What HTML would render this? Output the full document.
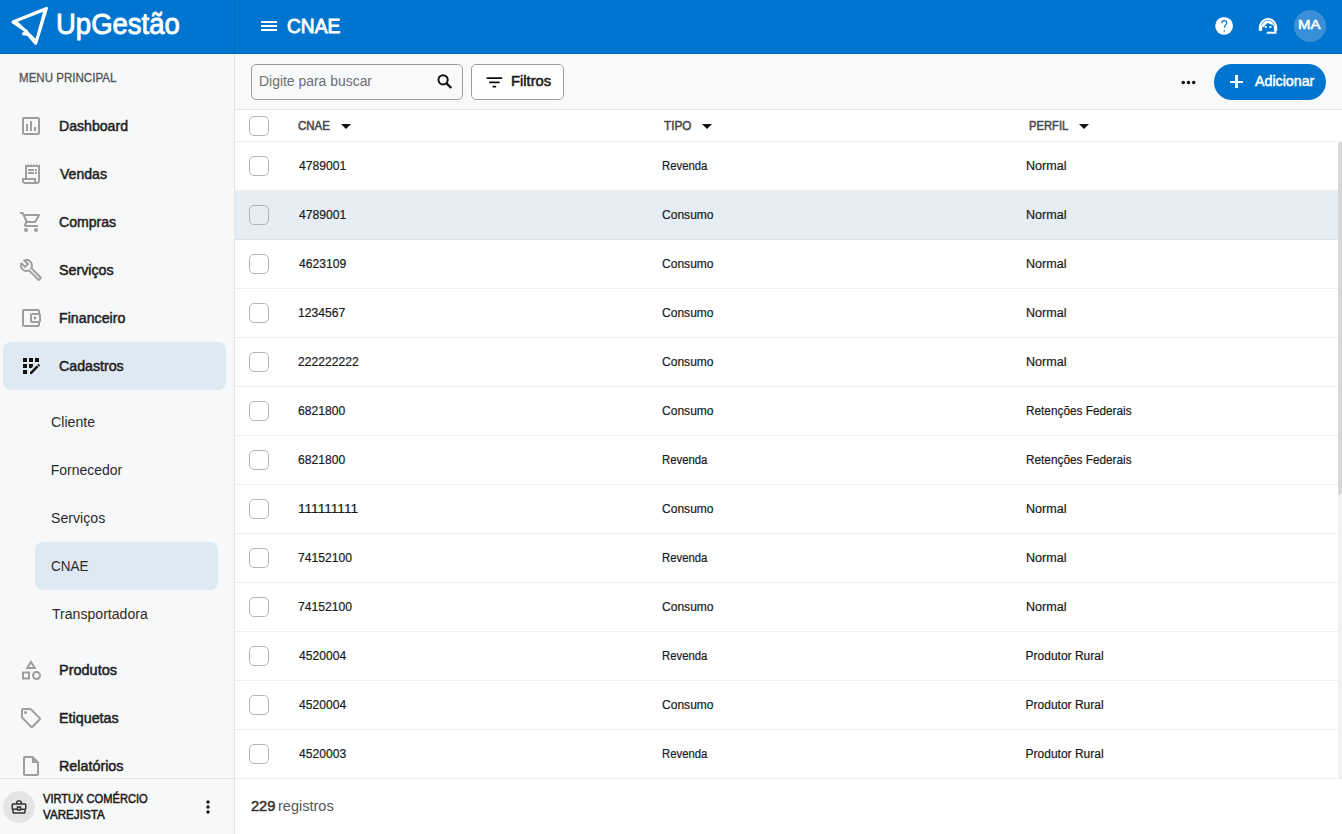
<!DOCTYPE html>
<html><head><meta charset="utf-8">
<style>
*{box-sizing:border-box;margin:0;padding:0}
html,body{width:1342px;height:834px;overflow:hidden;background:#fff;font-family:"Liberation Sans",sans-serif;position:relative}
.a{position:absolute;white-space:nowrap;line-height:1;transform-origin:0 0}
svg{display:block}
.ic{position:absolute}
</style></head><body>
<!-- top bar -->
<div style="position:absolute;left:0;top:0;width:1342px;height:54px;background:#0075cf"></div>
<div style="position:absolute;left:234px;top:0;width:1px;height:54px;background:#006dc0"></div>
<div style="position:absolute;left:0;top:53px;width:1342px;height:1px;background:#0068b8"></div>
<!-- sidebar -->
<div style="position:absolute;left:0;top:54px;width:234px;height:780px;background:#f7f8fa"></div>
<div style="position:absolute;left:234px;top:54px;width:1px;height:780px;background:#e2e3e5"></div>
<div style="position:absolute;left:3px;top:342px;width:223px;height:48px;background:#dfe9f3;border-radius:8px"></div>
<div style="position:absolute;left:35px;top:542px;width:183px;height:48px;background:#dfe9f3;border-radius:8px"></div>
<div style="position:absolute;left:0;top:778px;width:234px;height:1px;background:#e2e3e5"></div>
<div style="position:absolute;left:3px;top:791px;width:32px;height:32px;background:#e3e4e6;border-radius:50%"></div>
<!-- toolbar -->
<div style="position:absolute;left:235px;top:54px;width:1107px;height:55px;background:#f8f9fb"></div>
<div style="position:absolute;left:235px;top:109px;width:1107px;height:1px;background:#e3e4e6"></div>
<div style="position:absolute;left:251px;top:64px;width:212px;height:36px;border:1px solid #9d9d9d;border-radius:5px"></div>
<div style="position:absolute;left:471px;top:64px;width:93px;height:36px;border:1px solid #9d9d9d;border-radius:5px;background:#fff"></div>
<div style="position:absolute;left:1214px;top:64px;width:112px;height:36px;border-radius:18px;background:#0075cf"></div>
<!-- avatar -->
<div style="position:absolute;left:1294px;top:10px;width:32px;height:32px;border-radius:50%;background:#3a8fd6"></div>
<!-- table header -->
<div style="position:absolute;left:235px;top:141px;width:1107px;height:1px;background:#efefef"></div>
<div style="position:absolute;left:235px;top:142px;width:1103px;height:48px;background:#fff"></div><div style="position:absolute;left:235px;top:190px;width:1103px;height:1px;background:#efefef"></div><div style="position:absolute;left:249px;top:156px;width:20px;height:20px;border:1px solid #b3b3b3;border-radius:5px"></div><div style="position:absolute;left:235px;top:191px;width:1103px;height:48px;background:#e6edf4"></div><div style="position:absolute;left:235px;top:239px;width:1103px;height:1px;background:#dce2e8"></div><div style="position:absolute;left:249px;top:205px;width:20px;height:20px;border:1px solid #b3b3b3;border-radius:5px"></div><div style="position:absolute;left:235px;top:240px;width:1103px;height:48px;background:#fff"></div><div style="position:absolute;left:235px;top:288px;width:1103px;height:1px;background:#efefef"></div><div style="position:absolute;left:249px;top:254px;width:20px;height:20px;border:1px solid #b3b3b3;border-radius:5px"></div><div style="position:absolute;left:235px;top:289px;width:1103px;height:48px;background:#fff"></div><div style="position:absolute;left:235px;top:337px;width:1103px;height:1px;background:#efefef"></div><div style="position:absolute;left:249px;top:303px;width:20px;height:20px;border:1px solid #b3b3b3;border-radius:5px"></div><div style="position:absolute;left:235px;top:338px;width:1103px;height:48px;background:#fff"></div><div style="position:absolute;left:235px;top:386px;width:1103px;height:1px;background:#efefef"></div><div style="position:absolute;left:249px;top:352px;width:20px;height:20px;border:1px solid #b3b3b3;border-radius:5px"></div><div style="position:absolute;left:235px;top:387px;width:1103px;height:48px;background:#fff"></div><div style="position:absolute;left:235px;top:435px;width:1103px;height:1px;background:#efefef"></div><div style="position:absolute;left:249px;top:401px;width:20px;height:20px;border:1px solid #b3b3b3;border-radius:5px"></div><div style="position:absolute;left:235px;top:436px;width:1103px;height:48px;background:#fff"></div><div style="position:absolute;left:235px;top:484px;width:1103px;height:1px;background:#efefef"></div><div style="position:absolute;left:249px;top:450px;width:20px;height:20px;border:1px solid #b3b3b3;border-radius:5px"></div><div style="position:absolute;left:235px;top:485px;width:1103px;height:48px;background:#fff"></div><div style="position:absolute;left:235px;top:533px;width:1103px;height:1px;background:#efefef"></div><div style="position:absolute;left:249px;top:499px;width:20px;height:20px;border:1px solid #b3b3b3;border-radius:5px"></div><div style="position:absolute;left:235px;top:534px;width:1103px;height:48px;background:#fff"></div><div style="position:absolute;left:235px;top:582px;width:1103px;height:1px;background:#efefef"></div><div style="position:absolute;left:249px;top:548px;width:20px;height:20px;border:1px solid #b3b3b3;border-radius:5px"></div><div style="position:absolute;left:235px;top:583px;width:1103px;height:48px;background:#fff"></div><div style="position:absolute;left:235px;top:631px;width:1103px;height:1px;background:#efefef"></div><div style="position:absolute;left:249px;top:597px;width:20px;height:20px;border:1px solid #b3b3b3;border-radius:5px"></div><div style="position:absolute;left:235px;top:632px;width:1103px;height:48px;background:#fff"></div><div style="position:absolute;left:235px;top:680px;width:1103px;height:1px;background:#efefef"></div><div style="position:absolute;left:249px;top:646px;width:20px;height:20px;border:1px solid #b3b3b3;border-radius:5px"></div><div style="position:absolute;left:235px;top:681px;width:1103px;height:48px;background:#fff"></div><div style="position:absolute;left:235px;top:729px;width:1103px;height:1px;background:#efefef"></div><div style="position:absolute;left:249px;top:695px;width:20px;height:20px;border:1px solid #b3b3b3;border-radius:5px"></div><div style="position:absolute;left:235px;top:730px;width:1103px;height:48px;background:#fff"></div><div style="position:absolute;left:235px;top:778px;width:1103px;height:1px;background:#efefef"></div><div style="position:absolute;left:249px;top:744px;width:20px;height:20px;border:1px solid #b3b3b3;border-radius:5px"></div><div style="position:absolute;left:249px;top:116px;width:20px;height:20px;border:1px solid #b3b3b3;border-radius:5px"></div>
<!-- scrollbar -->
<div style="position:absolute;left:1338px;top:142px;width:4px;height:636px;background:#f1f2f4"></div>
<div style="position:absolute;left:1338px;top:142px;width:4px;height:353px;background:#d6d7d9;border-radius:2px"></div>
<!-- footer -->
<div style="position:absolute;left:235px;top:778px;width:1107px;height:1px;background:#efefef"></div>
<!-- logo -->
<svg class="ic" style="left:0;top:0" width="54" height="54" viewBox="0 0 54 54">
<path fill-rule="evenodd" fill="#fff" stroke="#fff" stroke-width="3" stroke-linejoin="round" d="M12.9 22 L46.5 8.4 L35.8 43.4 L27.6 34 L23.4 33.9 L26.6 31.3 Z M15.1 21.2 L45.3 9.3 L36.4 41.5 Z"/>
</svg>
<svg class="ic" style="left:19px;top:114px" width="24" height="24" viewBox="0 0 24 24"><path fill="#9e9e9e" d="M9 17H7v-7h2v7zm4 0h-2V7h2v10zm4 0h-2v-4h2v4zm2 2H5V5h14v14zm0-16H5c-1.1 0-2 .9-2 2v14c0 1.1.9 2 2 2h14c1.1 0 2-.9 2-2V5c0-1.1-.9-2-2-2z"/></svg><svg class="ic" style="left:19px;top:162px" width="24" height="24" viewBox="0 0 24 24"><path fill="#9e9e9e" d="M19.5 3.5 18 2l-1.5 1.5L15 2l-1.5 1.5L12 2l-1.5 1.5L9 2 7.5 3.5 6 2v14H3v3c0 1.66 1.34 3 3 3h12c1.66 0 3-1.34 3-3V2l-1.5 1.5zM15 20H6c-.55 0-1-.45-1-1v-1h10v2zm4-1c0 .55-.45 1-1 1s-1-.45-1-1v-3H8V5h11v14zM9 7h6v2H9zm7 0h2v2h-2zm-7 3h6v2H9zm7 0h2v2h-2z"/></svg><svg class="ic" style="left:19px;top:210px" width="24" height="24" viewBox="0 0 24 24"><path fill="#9e9e9e" d="M15.55 13c.75 0 1.41-.41 1.75-1.03l3.58-6.49c.37-.66-.11-1.48-.87-1.48H5.21l-.94-2H1v2h2l3.6 7.59-1.35 2.44C4.52 15.37 5.48 17 7 17h12v-2H7l1.1-2h7.45zM6.16 6h12.15l-2.76 5H8.53L6.16 6zM7 18c-1.1 0-1.99.9-1.99 2S5.9 22 7 22s2-.9 2-2-.9-2-2-2zm10 0c-1.1 0-1.99.9-1.99 2s.89 2 1.99 2 2-.9 2-2-.9-2-2-2z"/></svg><svg class="ic" style="left:19px;top:258px" width="24" height="24" viewBox="0 0 24 24"><path fill="#9e9e9e" d="M22.61 18.99l-9.08-9.08c.93-2.34.45-5.1-1.44-7C9.79.61 6.21.4 3.66 2.26L7.5 6.11 6.08 7.52 2.25 3.69C.39 6.23.6 9.82 2.9 12.11c1.86 1.86 4.57 2.35 6.89 1.48l9.11 9.11c.39.39 1.02.39 1.41 0l2.3-2.3c.4-.38.4-1.01 0-1.41zm-3 1.6l-9.46-9.46c-.61.45-1.29.72-2 .82-1.36.2-2.79-.21-3.83-1.25C3.37 9.76 2.93 8.5 3 7.26l3.09 3.09 4.24-4.24-3.09-3.09c1.24-.07 2.49.37 3.44 1.31 1.08 1.08 1.49 2.57 1.24 3.96-.12.71-.42 1.37-.88 1.96l9.45 9.45-.88.89z"/></svg><svg class="ic" style="left:19px;top:306px" width="24" height="24" viewBox="0 0 24 24"><path fill="#9e9e9e" d="M21 7.28V5c0-1.1-.9-2-2-2H5c-1.11 0-2 .9-2 2v14c0 1.1.89 2 2 2h14c1.1 0 2-.9 2-2v-2.28c.59-.35 1-.98 1-1.72V9c0-.74-.41-1.37-1-1.72zM20 9v6h-7V9h7zM5 19V5h14v2h-6c-1.1 0-2 .9-2 2v6c0 1.1.9 2 2 2h6v2H5zM16 13.5c.83 0 1.5-.67 1.5-1.5s-.67-1.5-1.5-1.5-1.5.67-1.5 1.5.67 1.5 1.5 1.5z"/></svg><svg class="ic" style="left:19px;top:658px" width="24" height="24" viewBox="0 0 24 24"><path fill="#9e9e9e" d="M12 2l-5.5 9h11L12 2zm0 3.84L13.93 9h-3.87L12 5.84zM17.5 13c-2.49 0-4.5 2.01-4.5 4.5s2.01 4.5 4.5 4.5 4.5-2.01 4.5-4.5-2.01-4.5-4.5-4.5zm0 7c-1.38 0-2.5-1.12-2.5-2.5s1.12-2.5 2.5-2.5 2.5 1.12 2.5 2.5-1.12 2.5-2.5 2.5zM3 21.5h8v-8H3v8zm2-6h4v4H5v-4z"/></svg><svg class="ic" style="left:19px;top:706px" width="24" height="24" viewBox="0 0 24 24"><path fill="#9e9e9e" d="M21.41 11.41l-8.83-8.83c-.37-.37-.88-.58-1.41-.58H4c-1.1 0-2 .9-2 2v7.17c0 .53.21 1.04.59 1.41l8.83 8.83c.78.78 2.05.78 2.83 0l7.17-7.17c.78-.78.78-2.04-.01-2.83zM12.83 20L4 11.17V4h7.17L20 12.83 12.83 20zM6.5 5C5.67 5 5 5.67 5 6.5S5.67 8 6.5 8 8 7.33 8 6.5 7.33 5 6.5 5z"/></svg><svg class="ic" style="left:19px;top:754px" width="24" height="24" viewBox="0 0 24 24"><path fill="#9e9e9e" d="M14 2H6c-1.1 0-1.99.9-1.99 2L4 20c0 1.1.89 2 1.99 2H18c1.1 0 2-.9 2-2V8l-6-6zM6 20V4h7v5h5v11H6z"/></svg><svg class="ic" style="left:19px;top:354px" width="24" height="24" viewBox="0 0 24 24"><path fill="#111" d="M10 4h4v4h-4zM4 16h4v4H4zm0-6h4v4H4zm0-6h4v4H4zm10 8.42V10h-4v4h2.42zm6.88-1.13-1.17-1.17c-.16-.16-.42-.16-.58 0l-.88.88L20 12.75l.88-.88c.16-.16.16-.42 0-.58zM11 18.25V20h1.75l6.67-6.67-1.75-1.75zM16 4h4v4h-4z"/></svg><div style="position:absolute;left:261px;top:21px;width:16px;height:2px;background:#fff"></div><div style="position:absolute;left:261px;top:25px;width:16px;height:2px;background:#fff"></div><div style="position:absolute;left:261px;top:29px;width:16px;height:2px;background:#fff"></div><svg class="ic" style="left:1200px;top:0" width="50" height="54" viewBox="1200 0 50 54"><circle cx="1224.1" cy="25.9" r="8.9" fill="#fff"/><path d="M1221.7 23.3 C1221.7 21.7 1222.8 20.6 1224.2 20.6 C1225.7 20.6 1226.8 21.7 1226.8 23 C1226.8 24.7 1224.5 25.3 1224.3 27.6" fill="none" stroke="#0075cf" stroke-width="1.15"/><rect x="1223.6" y="30.2" width="1.3" height="1.3" fill="#0075cf"/></svg><svg class="ic" style="left:1250px;top:10px" width="34" height="30" viewBox="1250 10 34 30"><path d="M1260 28.5 V27 A8 8 0 0 1 1276 27 V28.5" fill="none" stroke="#fff" stroke-width="2"/><rect x="1258.8" y="25.6" width="3.4" height="5.4" rx="1.2" fill="#fff"/><rect x="1273.8" y="25.6" width="3.4" height="5.4" rx="1.2" fill="#fff"/><path d="M1261.6 27 A6.4 6.4 0 0 1 1274.4 27 Z" fill="#fff"/><path d="M1263.3 27.2 L1267.4 22.9 L1273.6 25.3 L1273.6 33 L1263.3 33 Z" fill="#0075cf"/><rect x="1264.7" y="26.1" width="2.1" height="1.7" fill="#fff"/><rect x="1269.2" y="26.1" width="2.4" height="1.7" fill="#fff"/><path d="M1275.5 30 V32.7 H1266.8" fill="none" stroke="#fff" stroke-width="2"/></svg><svg class="ic" style="left:430px;top:68px" width="30" height="28" viewBox="430 68 30 28"><circle cx="443.1" cy="79.8" r="4.6" fill="none" stroke="#111" stroke-width="1.95"/><path d="M446.3 83.1 L451.3 88" stroke="#111" stroke-width="2.3"/></svg><svg class="ic" style="left:484px;top:71.6px" width="20.8" height="20.8" viewBox="0 0 24 24"><path fill="#0a0a0a" d="M10 18h4v-2h-4v2zM3 6v2h18V6H3zm3 7h12v-2H6v2z"/></svg><svg class="ic" style="left:1177.5px;top:71.5px" width="21" height="21" viewBox="0 0 24 24"><path fill="#111" d="M6 10c-1.1 0-2 .9-2 2s.9 2 2 2 2-.9 2-2-.9-2-2-2zm12 0c-1.1 0-2 .9-2 2s.9 2 2 2 2-.9 2-2-.9-2-2-2zm-6 0c-1.1 0-2 .9-2 2s.9 2 2 2 2-.9 2-2-.9-2-2-2z"/></svg><div style="position:absolute;left:1230px;top:80.6px;width:13.1px;height:2.2px;background:#fff"></div><div style="position:absolute;left:1235.45px;top:75.3px;width:2.2px;height:12.8px;background:#fff"></div><svg class="ic" style="left:334px;top:114px" width="24" height="24" viewBox="0 0 24 24"><path fill="#111" d="M7 10l5 5 5-5z"/></svg><svg class="ic" style="left:694.7px;top:114px" width="24" height="24" viewBox="0 0 24 24"><path fill="#111" d="M7 10l5 5 5-5z"/></svg><svg class="ic" style="left:1072px;top:114px" width="24" height="24" viewBox="0 0 24 24"><path fill="#111" d="M7 10l5 5 5-5z"/></svg><svg class="ic" style="left:10px;top:798px" width="18" height="18" viewBox="0 0 24 24"><path fill="#333" d="M20 7h-4V5l-2-2h-4L8 5v2H4c-1.1 0-2 .9-2 2v5c0 .75.4 1.38 1 1.73V19c0 1.11.89 2 2 2h14c1.11 0 2-.89 2-2v-3.28c.59-.35 1-.99 1-1.72V9c0-1.1-.9-2-2-2zM10 5h4v2h-4V5zM4 9h16v5h-5v-3H9v3H4V9zm9 6h-2v-2h2v2zm6 4H5v-3h4v1h6v-1h4v3z"/></svg><svg class="ic" style="left:198px;top:797px" width="20" height="20" viewBox="0 0 24 24"><path fill="#1a1a1a" d="M12 8c1.1 0 2-.9 2-2s-.9-2-2-2-2 .9-2 2 .9 2 2 2zm0 2c-1.1 0-2 .9-2 2s.9 2 2 2 2-.9 2-2-.9-2-2-2zm0 6c-1.1 0-2 .9-2 2s.9 2 2 2 2-.9 2-2-.9-2-2-2z"/></svg>
<div class="a" style="left:286.64px;top:16.17px;font-size:20px;font-weight:normal;-webkit-text-stroke:0.5px #fff;color:#fff;transform:scaleX(0.9572);-webkit-text-stroke:0.9px #fff;">CNAE</div>
<div class="a" style="left:1298.28px;top:18.47px;font-size:13.5px;font-weight:normal;-webkit-text-stroke:0.5px #fff;color:#fff;transform:scaleX(1.1047);-webkit-text-stroke:0.6px #fff;">MA</div>
<div class="a" style="left:56.16px;top:8.92px;font-size:29.5px;font-weight:normal;color:#fff;transform:scaleX(0.9319);-webkit-text-stroke:0.9px #fff;">UpGestão</div>
<div class="a" style="left:18.94px;top:71.74px;font-size:12px;font-weight:normal;color:#555;transform:scaleX(0.9629);-webkit-text-stroke:0.3px #555;">MENU PRINCIPAL</div>
<div class="a" style="left:58.89px;top:118.95px;font-size:14px;font-weight:normal;-webkit-text-stroke:0.5px #1f1f1f;color:#1f1f1f;transform:scaleX(1.0075);">Dashboard</div>
<div class="a" style="left:59.90px;top:166.95px;font-size:14px;font-weight:normal;-webkit-text-stroke:0.5px #1f1f1f;color:#1f1f1f;transform:scaleX(1.0043);">Vendas</div>
<div class="a" style="left:59.30px;top:214.95px;font-size:14px;font-weight:normal;-webkit-text-stroke:0.5px #1f1f1f;color:#1f1f1f;transform:scaleX(1.0054);">Compras</div>
<div class="a" style="left:59.29px;top:262.95px;font-size:14px;font-weight:normal;-webkit-text-stroke:0.5px #1f1f1f;color:#1f1f1f;transform:scaleX(1.0171);">Serviços</div>
<div class="a" style="left:58.88px;top:310.95px;font-size:14px;font-weight:normal;-webkit-text-stroke:0.5px #1f1f1f;color:#1f1f1f;transform:scaleX(1.0157);">Financeiro</div>
<div class="a" style="left:59.29px;top:358.95px;font-size:14px;font-weight:normal;-webkit-text-stroke:0.5px #1f1f1f;color:#1f1f1f;transform:scaleX(1.0144);">Cadastros</div>
<div class="a" style="left:58.86px;top:662.95px;font-size:14px;font-weight:normal;-webkit-text-stroke:0.5px #1f1f1f;color:#1f1f1f;transform:scaleX(1.0349);">Produtos</div>
<div class="a" style="left:58.87px;top:710.95px;font-size:14px;font-weight:normal;-webkit-text-stroke:0.5px #1f1f1f;color:#1f1f1f;transform:scaleX(1.0229);">Etiquetas</div>
<div class="a" style="left:58.87px;top:758.95px;font-size:14px;font-weight:normal;-webkit-text-stroke:0.5px #1f1f1f;color:#1f1f1f;transform:scaleX(1.0228);">Relatórios</div>
<div class="a" style="left:51.09px;top:415.05px;font-size:14px;font-weight:normal;color:#2b2b2b;transform:scaleX(1.0118);">Cliente</div>
<div class="a" style="left:50.70px;top:463.05px;font-size:14px;font-weight:normal;color:#2b2b2b;">Fornecedor</div>
<div class="a" style="left:51.09px;top:511.05px;font-size:14px;font-weight:normal;color:#2b2b2b;transform:scaleX(1.0095);">Serviços</div>
<div class="a" style="left:51.13px;top:559.05px;font-size:14px;font-weight:normal;color:#2b2b2b;transform:scaleX(0.9628);">CNAE</div>
<div class="a" style="left:51.50px;top:607.05px;font-size:14px;font-weight:normal;color:#2b2b2b;transform:scaleX(1.0063);">Transportadora</div>
<div class="a" style="left:42.91px;top:792.64px;font-size:12px;font-weight:normal;-webkit-text-stroke:0.5px #1a1a1a;color:#1a1a1a;transform:scaleX(0.9253);">VIRTUX COMÉRCIO</div>
<div class="a" style="left:42.90px;top:808.64px;font-size:12px;font-weight:normal;-webkit-text-stroke:0.5px #1a1a1a;color:#1a1a1a;transform:scaleX(0.9700);">VAREJISTA</div>
<div class="a" style="left:258.51px;top:73.75px;font-size:14px;font-weight:normal;color:#6e6e6e;transform:scaleX(0.9947);">Digite para buscar</div>
<div class="a" style="left:511.34px;top:74.05px;font-size:14px;font-weight:normal;-webkit-text-stroke:0.5px #1a1a1a;color:#1a1a1a;transform:scaleX(1.0548);">Filtros</div>
<div class="a" style="left:1254.60px;top:74.45px;font-size:14px;font-weight:normal;-webkit-text-stroke:0.5px #fff;color:#fff;transform:scaleX(1.0155);">Adicionar</div>
<div class="a" style="left:298.23px;top:119.84px;font-size:12px;font-weight:normal;-webkit-text-stroke:0.5px #474747;color:#474747;transform:scaleX(0.9565);">CNAE</div>
<div class="a" style="left:663.71px;top:119.84px;font-size:12px;font-weight:normal;-webkit-text-stroke:0.5px #474747;color:#474747;transform:scaleX(0.9779);">TIPO</div>
<div class="a" style="left:1028.66px;top:120.04px;font-size:12px;font-weight:normal;-webkit-text-stroke:0.5px #474747;color:#474747;transform:scaleX(0.9360);">PERFIL</div>
<div class="a" style="left:298.70px;top:159.54px;font-size:12px;font-weight:normal;color:#1a1a1a;transform:scaleX(1.0100);-webkit-text-stroke:0.2px #1a1a1a;">4789001</div>
<div class="a" style="left:661.86px;top:159.54px;font-size:12px;font-weight:normal;color:#1a1a1a;transform:scaleX(0.9447);-webkit-text-stroke:0.2px #1a1a1a;">Revenda</div>
<div class="a" style="left:1025.55px;top:159.54px;font-size:12px;font-weight:normal;color:#1a1a1a;transform:scaleX(1.0461);-webkit-text-stroke:0.2px #1a1a1a;">Normal</div>
<div class="a" style="left:298.70px;top:208.54px;font-size:12px;font-weight:normal;color:#1a1a1a;transform:scaleX(1.0100);-webkit-text-stroke:0.2px #1a1a1a;">4789001</div>
<div class="a" style="left:662.20px;top:208.54px;font-size:12px;font-weight:normal;color:#1a1a1a;transform:scaleX(1.0040);-webkit-text-stroke:0.2px #1a1a1a;">Consumo</div>
<div class="a" style="left:1025.55px;top:208.54px;font-size:12px;font-weight:normal;color:#1a1a1a;transform:scaleX(1.0461);-webkit-text-stroke:0.2px #1a1a1a;">Normal</div>
<div class="a" style="left:298.70px;top:257.54px;font-size:12px;font-weight:normal;color:#1a1a1a;transform:scaleX(1.0100);-webkit-text-stroke:0.2px #1a1a1a;">4623109</div>
<div class="a" style="left:662.20px;top:257.54px;font-size:12px;font-weight:normal;color:#1a1a1a;transform:scaleX(1.0040);-webkit-text-stroke:0.2px #1a1a1a;">Consumo</div>
<div class="a" style="left:1025.55px;top:257.54px;font-size:12px;font-weight:normal;color:#1a1a1a;transform:scaleX(1.0461);-webkit-text-stroke:0.2px #1a1a1a;">Normal</div>
<div class="a" style="left:298.09px;top:306.54px;font-size:12px;font-weight:normal;color:#1a1a1a;transform:scaleX(1.0100);-webkit-text-stroke:0.2px #1a1a1a;">1234567</div>
<div class="a" style="left:662.20px;top:306.54px;font-size:12px;font-weight:normal;color:#1a1a1a;transform:scaleX(1.0040);-webkit-text-stroke:0.2px #1a1a1a;">Consumo</div>
<div class="a" style="left:1025.55px;top:306.54px;font-size:12px;font-weight:normal;color:#1a1a1a;transform:scaleX(1.0461);-webkit-text-stroke:0.2px #1a1a1a;">Normal</div>
<div class="a" style="left:298.39px;top:355.54px;font-size:12px;font-weight:normal;color:#1a1a1a;transform:scaleX(1.0100);-webkit-text-stroke:0.2px #1a1a1a;">222222222</div>
<div class="a" style="left:662.20px;top:355.54px;font-size:12px;font-weight:normal;color:#1a1a1a;transform:scaleX(1.0040);-webkit-text-stroke:0.2px #1a1a1a;">Consumo</div>
<div class="a" style="left:1025.55px;top:355.54px;font-size:12px;font-weight:normal;color:#1a1a1a;transform:scaleX(1.0461);-webkit-text-stroke:0.2px #1a1a1a;">Normal</div>
<div class="a" style="left:298.39px;top:404.54px;font-size:12px;font-weight:normal;color:#1a1a1a;transform:scaleX(1.0100);-webkit-text-stroke:0.2px #1a1a1a;">6821800</div>
<div class="a" style="left:662.20px;top:404.54px;font-size:12px;font-weight:normal;color:#1a1a1a;transform:scaleX(1.0040);-webkit-text-stroke:0.2px #1a1a1a;">Consumo</div>
<div class="a" style="left:1025.62px;top:404.54px;font-size:12px;font-weight:normal;color:#1a1a1a;transform:scaleX(0.9830);-webkit-text-stroke:0.2px #1a1a1a;">Retenções Federais</div>
<div class="a" style="left:298.39px;top:453.54px;font-size:12px;font-weight:normal;color:#1a1a1a;transform:scaleX(1.0100);-webkit-text-stroke:0.2px #1a1a1a;">6821800</div>
<div class="a" style="left:661.86px;top:453.54px;font-size:12px;font-weight:normal;color:#1a1a1a;transform:scaleX(0.9447);-webkit-text-stroke:0.2px #1a1a1a;">Revenda</div>
<div class="a" style="left:1025.62px;top:453.54px;font-size:12px;font-weight:normal;color:#1a1a1a;transform:scaleX(0.9830);-webkit-text-stroke:0.2px #1a1a1a;">Retenções Federais</div>
<div class="a" style="left:298.18px;top:502.54px;font-size:12px;font-weight:normal;color:#1a1a1a;transform:scaleX(1.1340);-webkit-text-stroke:0.2px #1a1a1a;">111111111</div>
<div class="a" style="left:662.20px;top:502.54px;font-size:12px;font-weight:normal;color:#1a1a1a;transform:scaleX(1.0040);-webkit-text-stroke:0.2px #1a1a1a;">Consumo</div>
<div class="a" style="left:1025.55px;top:502.54px;font-size:12px;font-weight:normal;color:#1a1a1a;transform:scaleX(1.0461);-webkit-text-stroke:0.2px #1a1a1a;">Normal</div>
<div class="a" style="left:298.39px;top:551.54px;font-size:12px;font-weight:normal;color:#1a1a1a;transform:scaleX(1.0100);-webkit-text-stroke:0.2px #1a1a1a;">74152100</div>
<div class="a" style="left:661.86px;top:551.54px;font-size:12px;font-weight:normal;color:#1a1a1a;transform:scaleX(0.9447);-webkit-text-stroke:0.2px #1a1a1a;">Revenda</div>
<div class="a" style="left:1025.55px;top:551.54px;font-size:12px;font-weight:normal;color:#1a1a1a;transform:scaleX(1.0461);-webkit-text-stroke:0.2px #1a1a1a;">Normal</div>
<div class="a" style="left:298.39px;top:600.54px;font-size:12px;font-weight:normal;color:#1a1a1a;transform:scaleX(1.0100);-webkit-text-stroke:0.2px #1a1a1a;">74152100</div>
<div class="a" style="left:662.20px;top:600.54px;font-size:12px;font-weight:normal;color:#1a1a1a;transform:scaleX(1.0040);-webkit-text-stroke:0.2px #1a1a1a;">Consumo</div>
<div class="a" style="left:1025.55px;top:600.54px;font-size:12px;font-weight:normal;color:#1a1a1a;transform:scaleX(1.0461);-webkit-text-stroke:0.2px #1a1a1a;">Normal</div>
<div class="a" style="left:298.70px;top:649.54px;font-size:12px;font-weight:normal;color:#1a1a1a;transform:scaleX(1.0100);-webkit-text-stroke:0.2px #1a1a1a;">4520004</div>
<div class="a" style="left:661.86px;top:649.54px;font-size:12px;font-weight:normal;color:#1a1a1a;transform:scaleX(0.9447);-webkit-text-stroke:0.2px #1a1a1a;">Revenda</div>
<div class="a" style="left:1025.60px;top:649.54px;font-size:12px;font-weight:normal;color:#1a1a1a;-webkit-text-stroke:0.2px #1a1a1a;">Produtor Rural</div>
<div class="a" style="left:298.70px;top:698.54px;font-size:12px;font-weight:normal;color:#1a1a1a;transform:scaleX(1.0100);-webkit-text-stroke:0.2px #1a1a1a;">4520004</div>
<div class="a" style="left:662.20px;top:698.54px;font-size:12px;font-weight:normal;color:#1a1a1a;transform:scaleX(1.0040);-webkit-text-stroke:0.2px #1a1a1a;">Consumo</div>
<div class="a" style="left:1025.60px;top:698.54px;font-size:12px;font-weight:normal;color:#1a1a1a;-webkit-text-stroke:0.2px #1a1a1a;">Produtor Rural</div>
<div class="a" style="left:298.70px;top:747.54px;font-size:12px;font-weight:normal;color:#1a1a1a;transform:scaleX(1.0100);-webkit-text-stroke:0.2px #1a1a1a;">4520003</div>
<div class="a" style="left:661.86px;top:747.54px;font-size:12px;font-weight:normal;color:#1a1a1a;transform:scaleX(0.9447);-webkit-text-stroke:0.2px #1a1a1a;">Revenda</div>
<div class="a" style="left:1025.60px;top:747.54px;font-size:12px;font-weight:normal;color:#1a1a1a;-webkit-text-stroke:0.2px #1a1a1a;">Produtor Rural</div>
<div class="a" style="left:250.57px;top:798.95px;font-size:14px;font-weight:normal;-webkit-text-stroke:0.5px #333;color:#333;transform:scaleX(1.0409);">229</div>
<div class="a" style="left:277.87px;top:798.95px;font-size:14px;font-weight:normal;color:#555;transform:scaleX(1.0363);">registros</div>
</body></html>
